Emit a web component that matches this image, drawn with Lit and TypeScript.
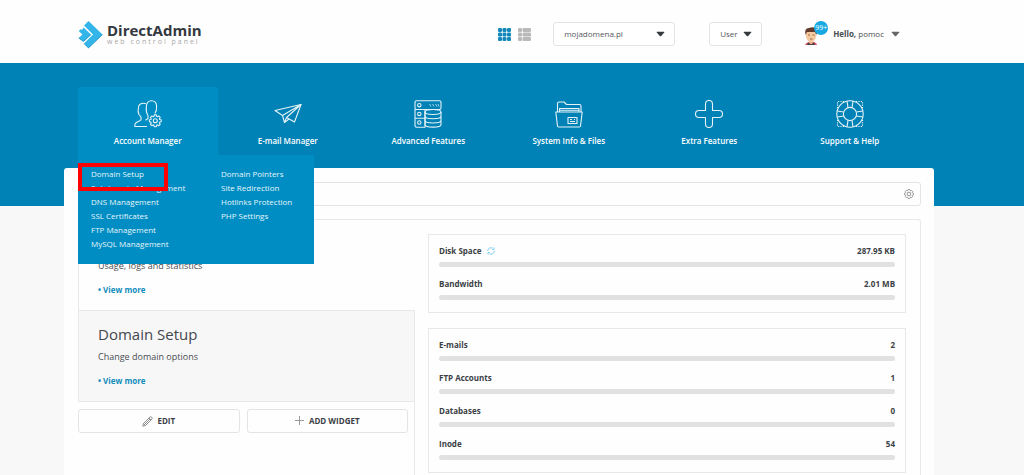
import { LitElement, html, css, svg, nothing } from "lit";
import { customElement, property } from "lit/decorators.js";

const gearPoints = (cx: number, cy: number, outer: number, inner: number) => {
  const pts: string[] = [];
  for (let i = 0; i < 8; i++) {
    for (const [off, r] of [[-0.3, inner], [-0.17, outer], [0.17, outer], [0.3, inner]]) {
      const a = (i * Math.PI) / 4 + off;
      pts.push(`${(cx + r * Math.cos(a)).toFixed(2)},${(cy + r * Math.sin(a)).toFixed(2)}`);
    }
  }
  return pts.join(" ");
};

const icons: Record<string, unknown> = {
  account: svg`
    <path d="M12 3.700C8 2.500 4.800 4 4.400 7.500C4 9.500 3.900 12.500 5 14.500L7 17V19.700C6 21.300 2.500 21.800 1.300 23.500C.8 24.500 .8 25.500 .8 26.500H13" />
    <path d="M11.500 20.300L14 18.500V15.500C12.300 13 12 10.500 12.300 7C12.500 3 14 .8 17.300 .8C20.800 .8 22.600 3 22.600 6.500C22.800 9 22.500 11.500 20.800 13.500" />
    <polygon points=${gearPoints(21.3, 20.8, 6, 4.6)} />
    <circle cx="21.3" cy="20.8" r="2" />`,
  mail: svg`
    <path d="M1 10.500L27 4.500L20.500 22L12.500 17.500L10.500 22.500L8.500 15.500Z" />
    <path d="M8.500 15.500L27 4.500L12.500 17.500M10.500 22.500L15 19" />`,
  server: svg`
    <rect x="1" y=".8" width="26" height="8.700" rx="1.500" />
    <path d="M11 9.500H1V18.200H11M1 18.200V25.500Q1 27.200 2.700 27.200H11V9.500" />
    <circle cx="5.300" cy="5.200" r="1.700" /><circle cx="5.300" cy="13.900" r="1.700" /><circle cx="5.300" cy="22.500" r="1.700" />
    <path d="M15.500 4L17 6.500M18.500 4L20 6.500M21.500 4L23 6.500M24 4L25 6.500" stroke-width=".7" />
    <ellipse cx="19" cy="12" rx="8" ry="2.500" />
    <path d="M11 12V24.500C11 28 27 28 27 24.500V12M11 16.200C11 19.500 27 19.500 27 16.200M11 20.500C11 23.800 27 23.800 27 20.500" />`,
  folder: svg`
    <path d="M2.500 12V3.500Q2.500 2 4 2H9L11.500 4.500H24.500Q26 4.500 26 6V12" />
    <path d="M4.500 12V8.500H24V12M5 10.300H23.500" />
    <path d="M.8 12H27.200L25.500 26Q25.400 27 24.400 27H3.600Q2.600 27 2.500 26Z" />
    <rect x="13" y="17.500" width="9" height="6" /><path d="M15 19.500H17M19 19.500H20M15 21.500H20" />`,
  plus: svg`
    <path d="M10.500 10.500V4A3.500 3.500 0 0 1 17.500 4V10.500H24A3.500 3.500 0 0 1 24 17.500H17.500V24A3.500 3.500 0 0 1 10.500 24V17.500H4A3.500 3.500 0 0 1 4 10.500Z" />`,
  support: svg`
    <circle cx="14" cy="14" r="13.200" /><circle cx="14" cy="14" r="6.600" />
    <path d="M11 1.200L12 7.700M17 1.200L16 7.700M11 26.800L12 20.300M17 26.800L16 20.300M1.200 11L7.700 12M1.200 17L7.700 16M26.800 11L20.300 12M26.800 17L20.300 16" />
    <path d="M8 1.500H1.500V8M20 1.500H26.500V8M8 26.500H1.500V20M20 26.500H26.500V20" stroke-dasharray="1.200 1.200" />`,
};

const tabs = [
  { icon: "account", label: "Account Manager" },
  { icon: "mail", label: "E-mail Manager" },
  { icon: "server", label: "Advanced Features" },
  { icon: "folder", label: "System Info & Files" },
  { icon: "plus", label: "Extra Features" },
  { icon: "support", label: "Support & Help" },
];

const menu = [
  ["Domain Setup", "Subdomain Management", "DNS Management", "SSL Certificates", "FTP Management", "MySQL Management"],
  ["Domain Pointers", "Site Redirection", "Hotlinks Protection", "PHP Settings"],
];

@customElement("stat-box")
class StatBox extends LitElement {
  @property({ attribute: false }) rows: { name: string; value: string; refresh?: boolean }[] = [];

  static styles = css`
    :host { display: block; border: 1px solid #e8e8e8; padding: 8px 10px 12px; }
    .list { display: flex; flex-direction: column; gap: 9px; }
    .row { display: grid; grid-template-columns: 1fr auto; row-gap: 3px; align-items: center; font-size: 8px; line-height: 16px; font-weight: 700; color: #3b3f45; }
    .name { display: flex; align-items: center; gap: 5px; }
    .bar { grid-column: 1 / -1; height: 5px; border-radius: 3px; background: #e1e1e1; }
    .refresh { display: flex; padding: 0; border: 0; background: none; color: #5bc4ea; }
  `;

  render() {
    return html`<div class="list">
      ${this.rows.map(
        (r) => html`<div class="row">
          <span class="name">${r.name}
            ${r.refresh
              ? html`<button class="refresh" aria-label="Refresh">
                  <svg width="8" height="8" viewBox="0 0 8 8" fill="none" stroke="currentColor" stroke-width=".8">
                    <path d="M.7 4A3.300 3.300 0 0 1 5.500 1.100M7.300 4A3.300 3.300 0 0 1 2.500 6.900" /><path d="M7 .5V2.500H5.200M1 7.500V5.500H2.800" />
                  </svg></button>`
              : nothing}
          </span>
          <span>${r.value}</span>
          <div class="bar"></div>
        </div>`
      )}
    </div>`;
  }
}

@customElement("app-root")
class AppRoot extends LitElement {
  static styles = css`
    :host { display: flex; flex-direction: column; min-height: 100vh; background: #f8f8f9; color: #4a4d52; font: 8px/14px "Open Sans", "Noto Sans", sans-serif; }
    * { box-sizing: border-box; }
    a { color: inherit; text-decoration: none; }
    button, select, input { font: inherit; color: inherit; }
    h2, p, ul { margin: 0; padding: 0; font-weight: 400; }
    .header { height: 63px; background: #fefefe; padding: 5px 124px 0 78px; display: flex; align-items: center; }
    .logo { display: flex; align-items: center; gap: 4px; margin-right: auto; }
    .brand { display: flex; flex-direction: column; }
    .name { font: 700 15px/16px "Open Sans", sans-serif; color: #34383f; }
    .tag { font-size: 7px; line-height: 8px; color: #a8a8a8; letter-spacing: 2px; }
    .tools { display: flex; align-items: center; }
    .views { display: flex; gap: 7px; margin-right: 22px; }
    .view { display: flex; padding: 0; border: 0; background: none; }
    .picker { display: grid; align-items: center; color: #3b3f45; }
    .picker > * { grid-area: 1 / 1; }
    .picker select { appearance: none; width: 100%; height: 24px; padding: 0 10px; border: 1px solid #e4e4e4; border-radius: 3px; background: #fff; color: #55585d; }
    .picker svg { justify-self: end; margin-right: 10px; pointer-events: none; }
    .domain { width: 122px; margin-right: 34px; }
    .role { width: 53px; margin-right: 42px; }
    .user { display: flex; align-items: center; gap: 7px; padding: 0; border: 0; background: none; }
    .avatar { display: block; position: relative; margin-right: -2px; width: 24px; height: 26px; }
    .badge { position: absolute; top: 0; right: 0; width: 14px; height: 14px; border-radius: 50%; background: #18a9e2; color: #fff; font-size: 7px; line-height: 14px; text-align: center; }
    .band { height: 143px; background: #0082b7; padding: 24px 104px 0 77px; }
    .tabs { position: relative; display: grid; grid-template-columns: repeat(6, 1fr); }
    .tab { display: flex; flex-direction: column; align-items: center; gap: 6px; height: 68px; padding-top: 13px; color: #fff; font-weight: 600; }
    .tab svg { display: block; opacity: .9; }
    .active { background: #008dc3; border-radius: 3px 3px 0 0; margin: 0 0 0 1px; }
    .drop { position: absolute; z-index: 2; top: 100%; left: 1px; width: 236px; padding: 12px 13px 13px; background: #008dc3; color: #e6f5fb; display: grid; grid-template-columns: 130px 1fr; align-items: start; }
    .drop ul { list-style: none; white-space: nowrap; }
    .mark { position: absolute; top: 8px; left: 0; width: 90px; height: 28px; border: 4px solid #f00; pointer-events: none; }
    .panel { flex: 1; margin: -38px 90px 0 64px; padding: 14px 13px 0 14px; background: #fefefe; border-radius: 3px 3px 0 0; display: flex; flex-direction: column; gap: 13px; }
    .search { display: flex; align-items: center; height: 24px; border: 1px solid #e4e4e4; border-radius: 3px; padding-right: 6px; }
    .search input { flex: 1; min-width: 0; border: 0; background: none; outline: 0; padding: 0 10px; }
    .gear { display: flex; padding: 0; border: 0; background: none; color: #888; }
    .board { flex: 1; border: solid #e8e8e8; border-width: 1px 1px 0 0; border-radius: 3px 3px 0 0; display: grid; grid-template-columns: 337px 1fr; }
    .left { display: flex; flex-direction: column; }
    .rest { flex: 1; border-right: 1px solid #e8e8e8; }
    .widget { padding: 14px 19px 0; border-left: 1px solid #e8e8e8; height: 90px; font-size: 9px; display: flex; flex-direction: column; align-items: flex-start; }
    .widget h2 { font-size: 15px; line-height: 18px; margin-bottom: 7px; color: #44474c; }
    .logs { padding-top: 39px; }
    .soft { height: 92px; background: #f7f7f8; border: solid #e8e8e8; border-width: 1px 0 1px 1px; }
    .more { margin-top: 10px; font-size: 8px; font-weight: 700; color: #118dbd; }
    .actions { display: grid; grid-template-columns: 1fr 1fr; gap: 7px; padding: 7px 6px 0 0; }
    .action { display: flex; align-items: center; justify-content: center; gap: 4px; height: 24px; border: 1px solid #e4e4e4; border-radius: 3px; background: #fefefe; font-weight: 700; color: #3b3f45; }
    .right { padding: 14px 14px 2px 13px; display: flex; flex-direction: column; gap: 15px; }
  `;

  private caret(fill: string) {
    return html`<svg width="9" height="6" viewBox="0 0 9 6"><path d="M1.200 .7H7.800Q9 .7 8.200 1.600L5.200 4.900Q4.500 5.600 3.800 4.900L.8 1.600Q0 .7 1.200 .7Z" fill=${fill} /></svg>`;
  }

  render() {
    const dots = [0, 1, 2];
    return html`
      <header class="header">
        <a class="logo" href="#" aria-label="DirectAdmin">
          <svg width="25" height="29" viewBox="0 0 25 29">
            <path d="M10.500 1L24.500 14.500L10.500 28L6 23.500L15 14.500L6 5.500Z" fill="#33b5e9" />
            <path d="M5.500 7.500L13 14.500L5.500 21.500L.7 18L4.500 14.500L.7 11L3 9L4 10Z" fill="#33b5e9" />
            <path d="M24.500 14.500L10.500 28L6 23.500M13 14.500L5.500 21.500L.7 18" fill="none" stroke="#168dc4" stroke-width=".8" />
          </svg>
          <span class="brand"><span class="name">DirectAdmin</span><span class="tag">web control panel</span></span>
        </a>
        <div class="tools">
          <div class="views">
            <button class="view" aria-label="Grid view"><svg width="13" height="13" viewBox="0 0 13 13" fill="#1488ba">
              ${dots.map((y) => dots.map((x) => svg`<rect x=${x * 4.5} y=${y * 4.5} width="4" height="4" rx="1.200" />`))}
            </svg></button>
            <button class="view" aria-label="List view"><svg width="13" height="13" viewBox="0 0 13 13" fill="#b9b9b9">
              ${dots.map((y) => svg`<rect x="0" y=${y * 4.5} width="4" height="4" rx="1.200" /><rect x="4.500" y=${y * 4.5} width="8.500" height="4" rx="1.200" />`)}
            </svg></button>
          </div>
          <div class="picker domain"><select aria-label="Domain"><option>mojadomena.pl</option></select>${this.caret("#34383f")}</div>
          <div class="picker role"><select aria-label="Access level"><option>User</option></select>${this.caret("#34383f")}</div>
          <button class="user">
            <span class="avatar">
              <svg width="24" height="26" viewBox="0 0 24 26">
                <path d="M1 24Q2 21 7 20.500H8Q12.500 21 13 24Z" fill="#e4546c" />
                <path d="M5 19.500H9V22L7 23.500L5 21.500Z" fill="#e8b48c" /><path d="M4 21.500L7 23.500L10 21.500L11 24H3Z" fill="#444" />
                <path d="M2 11H12V16Q11 20.500 7 21Q3 20.500 2 16Z" fill="#f4c9a0" />
                <path d="M1.500 14Q0 7 5 7Q10 5 12.500 8Q13.500 10 12.500 14L11 11H3Z" fill="#62392b" />
                <path d="M4 14H6M8.500 14H10.500M6 18H8.500" stroke="#7b4b35" stroke-width=".8" />
              </svg>
              <span class="badge">99+</span>
            </span>
            <span><b>Hello,</b> pomoc</span>
            ${this.caret("#666")}
          </button>
        </div>
      </header>

      <div class="band">
        <nav class="tabs">
          ${tabs.map(
            (t, i) => html`<a class="tab ${i === 0 ? "active" : ""}" href="#">
              <svg width="28" height="28" viewBox="0 0 28 28" fill="none" stroke="#fff" stroke-width="1.100" stroke-linejoin="round">${icons[t.icon]}</svg>
              <span>${t.label}</span>
            </a>`
          )}
          <div class="drop">
            ${menu.map((col) => html`<ul>${col.map((m) => html`<li><a href="#">${m}</a></li>`)}</ul>`)}
            <div class="mark"></div>
          </div>
        </nav>
      </div>

      <main class="panel">
        <div class="search">
          <input type="text" aria-label="Search" />
          <button class="gear" aria-label="Settings">
            <svg width="10" height="10" viewBox="0 0 10 10" fill="none" stroke="currentColor" stroke-width=".9">
              <polygon points=${gearPoints(5, 5, 4.5, 3.7)} /><circle cx="5" cy="5" r="1.800" />
            </svg>
          </button>
        </div>
        <div class="board">
          <div class="left">
            <section class="widget logs"><p>Usage, logs and statistics</p><a class="more" href="#">• View more</a></section>
            <div class="rest">
              <section class="widget soft"><h2>Domain Setup</h2><p>Change domain options</p><a class="more" href="#">• View more</a></section>
              <div class="actions">
                <button class="action"><svg width="11" height="11" viewBox="0 0 11 11" fill="none" stroke="#777" stroke-width=".8"><path d="M.8 10.200L1.500 7.500L8 1Q8.800 .3 9.700 1.200Q10.700 2.200 10 3L3.500 9.500ZM7 2L9 4M1.500 7.500L3.500 9.500M2.500 8.500L8 3" /></svg>EDIT</button>
                <button class="action"><svg width="10" height="10" viewBox="0 0 10 10" stroke="#999" stroke-width="1"><path d="M4.500 0V9M0 4.500H9" /></svg>ADD WIDGET</button>
              </div>
            </div>
          </div>
          <div class="right">
            <stat-box .rows=${[{ name: "Disk Space", value: "287.95 KB", refresh: true }, { name: "Bandwidth", value: "2.01 MB" }]}></stat-box>
            <stat-box .rows=${[{ name: "E-mails", value: "2" }, { name: "FTP Accounts", value: "1" }, { name: "Databases", value: "0" }, { name: "Inode", value: "54" }]}></stat-box>
          </div>
        </div>
      </main>
    `;
  }
}
